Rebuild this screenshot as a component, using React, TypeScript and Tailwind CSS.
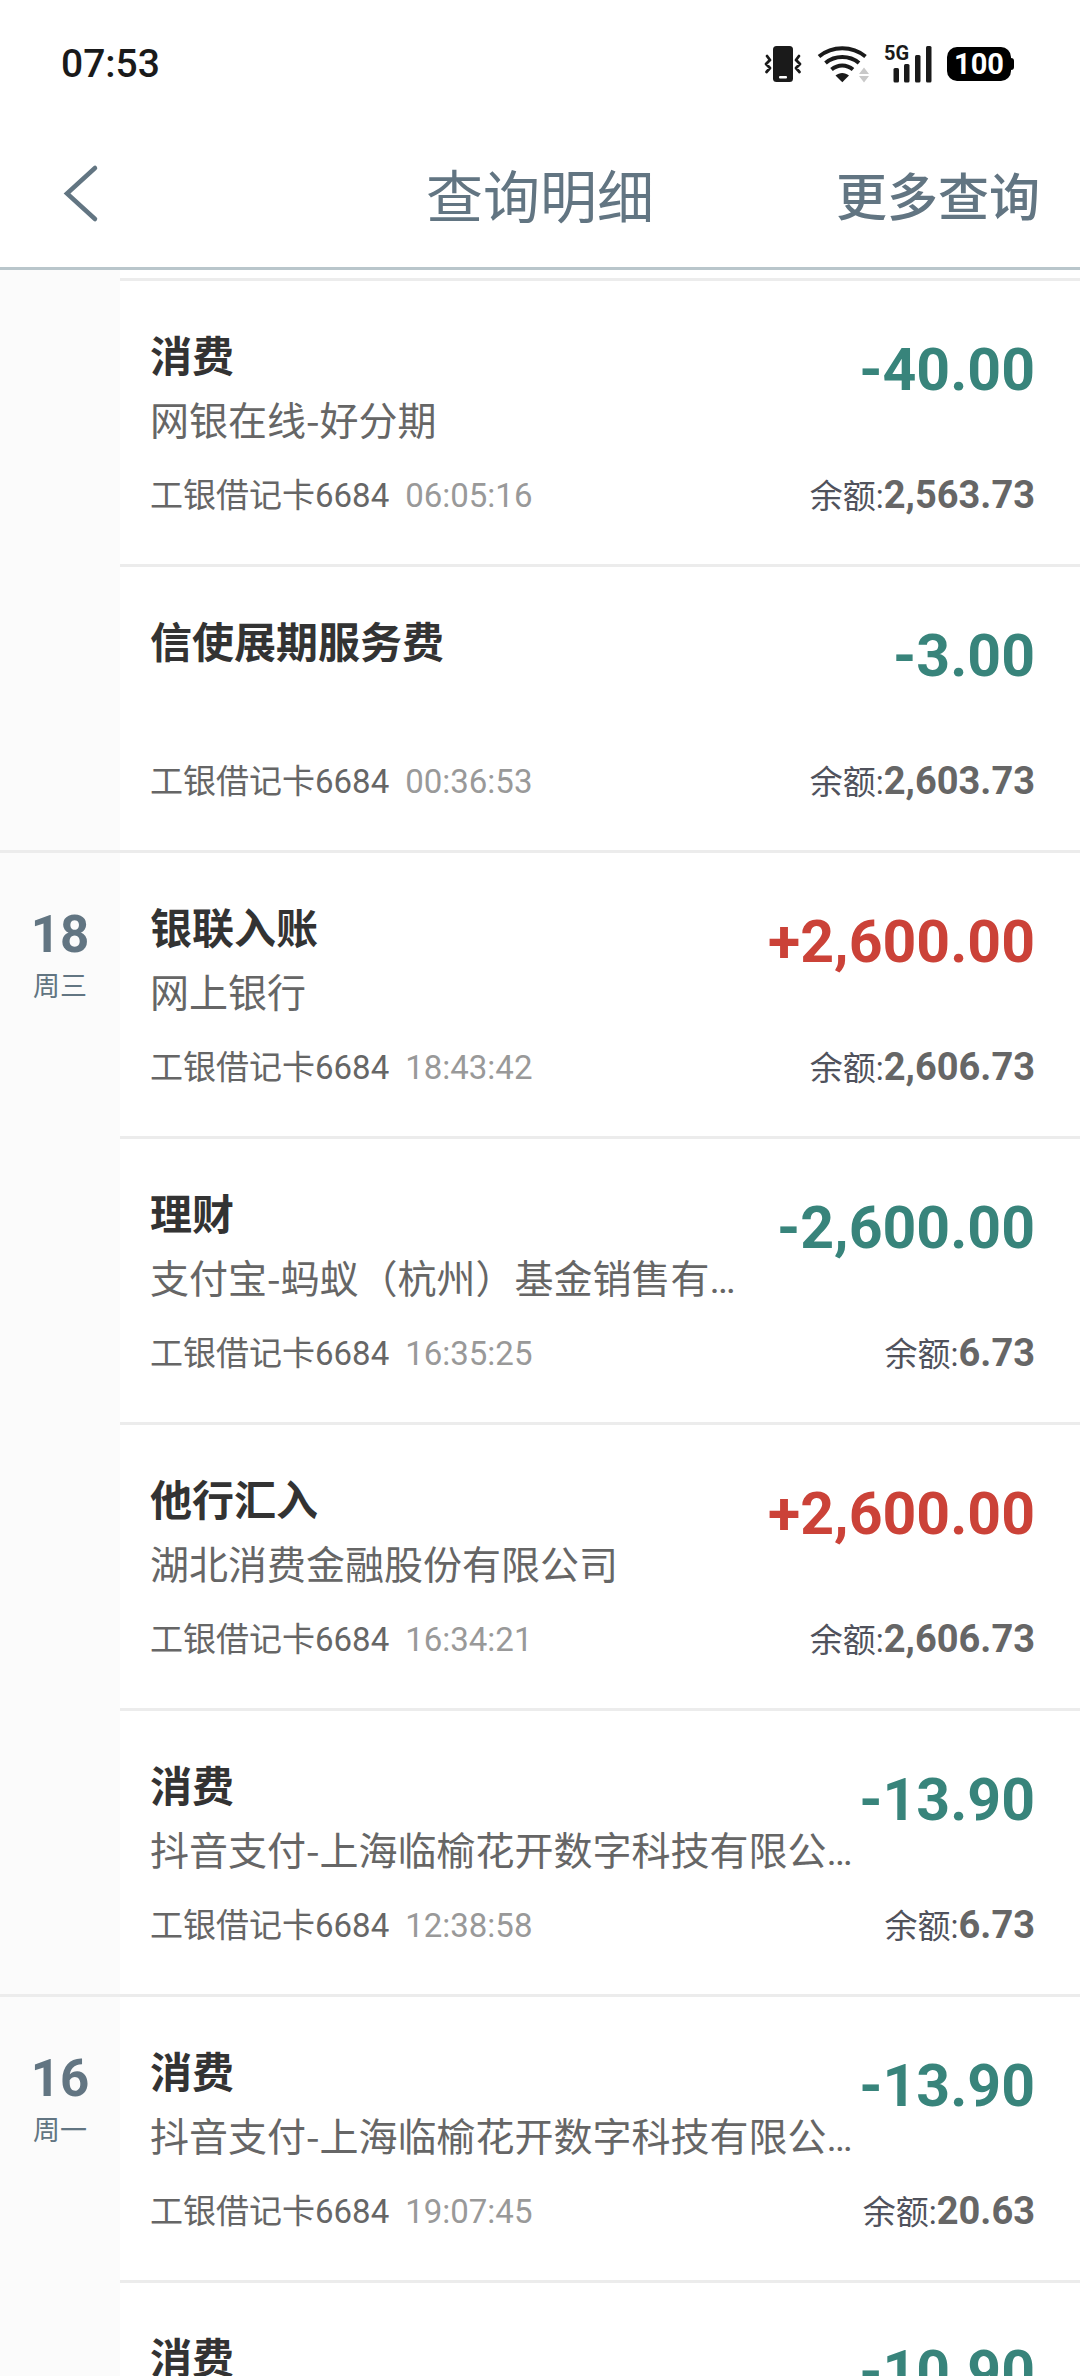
import clsx from "clsx";

type Record = {
  title: string;
  detail?: string;
  clipped?: boolean;
  amount: string;
  time?: string;
  balance?: string;
};

type DayGroup = {
  day?: string;
  weekday?: string;
  records: Record[];
};

const CARD = "工银借记卡6684";

const groups: DayGroup[] = [
  {
    records: [
      { title: "消费", detail: "网银在线-好分期", amount: "-40.00", time: "06:05:16", balance: "2,563.73" },
      { title: "信使展期服务费", amount: "-3.00", time: "00:36:53", balance: "2,603.73" },
    ],
  },
  {
    day: "18",
    weekday: "周三",
    records: [
      { title: "银联入账", detail: "网上银行", amount: "+2,600.00", time: "18:43:42", balance: "2,606.73" },
      { title: "理财", detail: "支付宝-蚂蚁（杭州）基金销售有", clipped: true, amount: "-2,600.00", time: "16:35:25", balance: "6.73" },
      { title: "他行汇入", detail: "湖北消费金融股份有限公司", amount: "+2,600.00", time: "16:34:21", balance: "2,606.73" },
      { title: "消费", detail: "抖音支付-上海临榆花开数字科技有限公", clipped: true, amount: "-13.90", time: "12:38:58", balance: "6.73" },
    ],
  },
  {
    day: "16",
    weekday: "周一",
    records: [
      { title: "消费", detail: "抖音支付-上海临榆花开数字科技有限公", clipped: true, amount: "-13.90", time: "19:07:45", balance: "20.63" },
      { title: "消费", amount: "-10.90" },
    ],
  },
];

function VibrateIcon() {
  return (
    <svg width="38" height="38" viewBox="0 0 38 38" fill="none" aria-hidden="true">
      <rect x="9" y="1" width="20" height="36" rx="3.5" fill="#1a1a1a" />
      <rect x="15" y="31" width="8" height="2.5" rx="1" fill="#fff" />
      <path
        d="M3 11l3 4-4 4 4 4-3.500 4M35 11l-3 4 4 4-4 4 3.500 4"
        stroke="#1a1a1a"
        strokeWidth="2.8"
        strokeLinecap="round"
        strokeLinejoin="round"
      />
    </svg>
  );
}

function WifiIcon() {
  return (
    <svg width="52" height="38" viewBox="0 0 52 38" fill="none" aria-hidden="true">
      <path
        d="M2 11.500C15.500 0.500 35 0.500 48.500 11.500M8.500 18C18 10 32.500 10 42 18M14.500 24.500C21 19 29.500 19 36 24.500"
        stroke="#1a1a1a"
        strokeWidth="4"
      />
      <path d="M18.500 30.500C22.500 27 28 27 32 30.500L25.300 37.200Z" fill="#1a1a1a" />
      <path d="M42 29l5-6.500 5 6.500zM42 31l5 6.500 5-6.500z" fill="#c9c9c9" />
    </svg>
  );
}

function SignalIcon() {
  return (
    <div className="relative h-[38px] w-12">
      <span className="absolute left-0 top-0 text-[20px] leading-4 font-bold">5G</span>
      <svg width="48" height="38" viewBox="0 0 48 38" fill="#1a1a1a" aria-hidden="true">
        <rect x="9.5" y="23" width="5.5" height="14.5" rx="1.5" />
        <rect x="20" y="19" width="5.5" height="18.5" rx="1.5" />
        <rect x="31" y="10" width="5.5" height="27.5" rx="1.5" />
        <rect x="42" y="1" width="5.5" height="36.5" rx="1.5" />
      </svg>
    </div>
  );
}

function StatusBar() {
  return (
    <div className="flex h-32 shrink-0 items-center justify-between pr-[66px] pl-[61px] text-[#1a1a1a]">
      <span className="text-[39px] leading-[48px] font-medium">07:53</span>
      <div className="flex items-center gap-[15px]">
        <VibrateIcon />
        <WifiIcon />
        <SignalIcon />
        <div className="flex items-center">
          <span className="flex h-[34px] w-16 items-center justify-center rounded-[10px] bg-black text-[29px] leading-8 font-bold text-white">
            100
          </span>
          <span className="h-3 w-[3px] rounded-r-sm bg-black" />
        </div>
      </div>
    </div>
  );
}

function PageHeader() {
  return (
    <header className="grid h-[142px] shrink-0 grid-cols-[1fr_auto_1fr] items-center border-b-[3px] border-[#b9c6cb] px-10 pt-[3px] text-[#627582]">
      <button type="button" aria-label="返回" className="justify-self-start pl-5">
        <svg width="40" height="72" viewBox="0 0 40 72" fill="none" aria-hidden="true">
          <path d="M35 5L7 30.500L35 56" stroke="#627582" strokeWidth="4.5" strokeLinecap="round" />
        </svg>
      </button>
      <h1 className="text-[57px] leading-[72px]">查询明细</h1>
      <button type="button" className="justify-self-end text-[51px] leading-[72px] font-medium">
        更多查询
      </button>
    </header>
  );
}

function RecordRow({ record, first }: { record: Record; first: boolean }) {
  const income = record.amount.startsWith("+");

  return (
    <li
      className={clsx(
        "pt-[47px] pr-[45px] pb-[46px] pl-[30px]",
        !first && "border-t-[3px] border-[#ececec]",
      )}
    >
      <div className="flex items-start justify-between">
        <div className="min-w-0 flex-1">
          <h2 className="text-[42px] leading-[60px] font-bold text-[#333]">{record.title}</h2>
          <p className="mt-0.5 h-14 font-['Noto_Sans_CJK_SC',sans-serif] text-[39px] leading-[56px] whitespace-nowrap text-[#666]">
            {record.detail}
            {record.clipped && <span className="font-[Roboto,sans-serif]">…</span>}
          </p>
        </div>
        <p
          className={clsx(
            "mt-1.5 shrink-0 text-[59px] leading-[72px] font-bold",
            income ? "text-[#cb4238]" : "text-[#38847b]",
          )}
        >
          {record.amount}
        </p>
      </div>
      <div className="mt-7 flex h-11 items-center justify-between leading-[44px]">
        {record.time && (
          <p className="text-[33px] text-[#666]">
            {CARD}
            <span className="ml-4 text-[#999]">{record.time}</span>
          </p>
        )}
        {record.balance && (
          <p className="text-[33px] text-[#50525c]">
            余额:
            <span className="text-[38px] font-bold text-[#666]">{record.balance}</span>
          </p>
        )}
      </div>
    </li>
  );
}

function DaySection({ group }: { group: DayGroup }) {
  return (
    <section className={clsx("flex", group.day && "border-t-[3px] border-[#ececec]")}>
      <div className="w-[120px] shrink-0 bg-[#fbfbfb] pt-[50px] text-center text-[#627582]">
        {group.day && (
          <>
            <p className="text-[51px] leading-[64px] font-bold">{group.day}</p>
            <p className="text-[27px] leading-10">{group.weekday}</p>
          </>
        )}
      </div>
      <ul className={clsx("min-w-0 flex-1", !group.day && "pt-2")}>
        {group.records.map((record, i) => (
          <RecordRow key={i} record={record} first={i === 0 && Boolean(group.day)} />
        ))}
      </ul>
    </section>
  );
}

export default function App() {
  return (
    <div
      lang="zh-CN"
      className="flex h-screen flex-col bg-white font-[Roboto,'Noto_Sans_CJK_SC',sans-serif]"
    >
      <StatusBar />
      <PageHeader />
      <main className="min-h-0 flex-1 overflow-y-auto [scrollbar-width:none]">
        {groups.map((group, i) => (
          <DaySection key={i} group={group} />
        ))}
      </main>
    </div>
  );
}
